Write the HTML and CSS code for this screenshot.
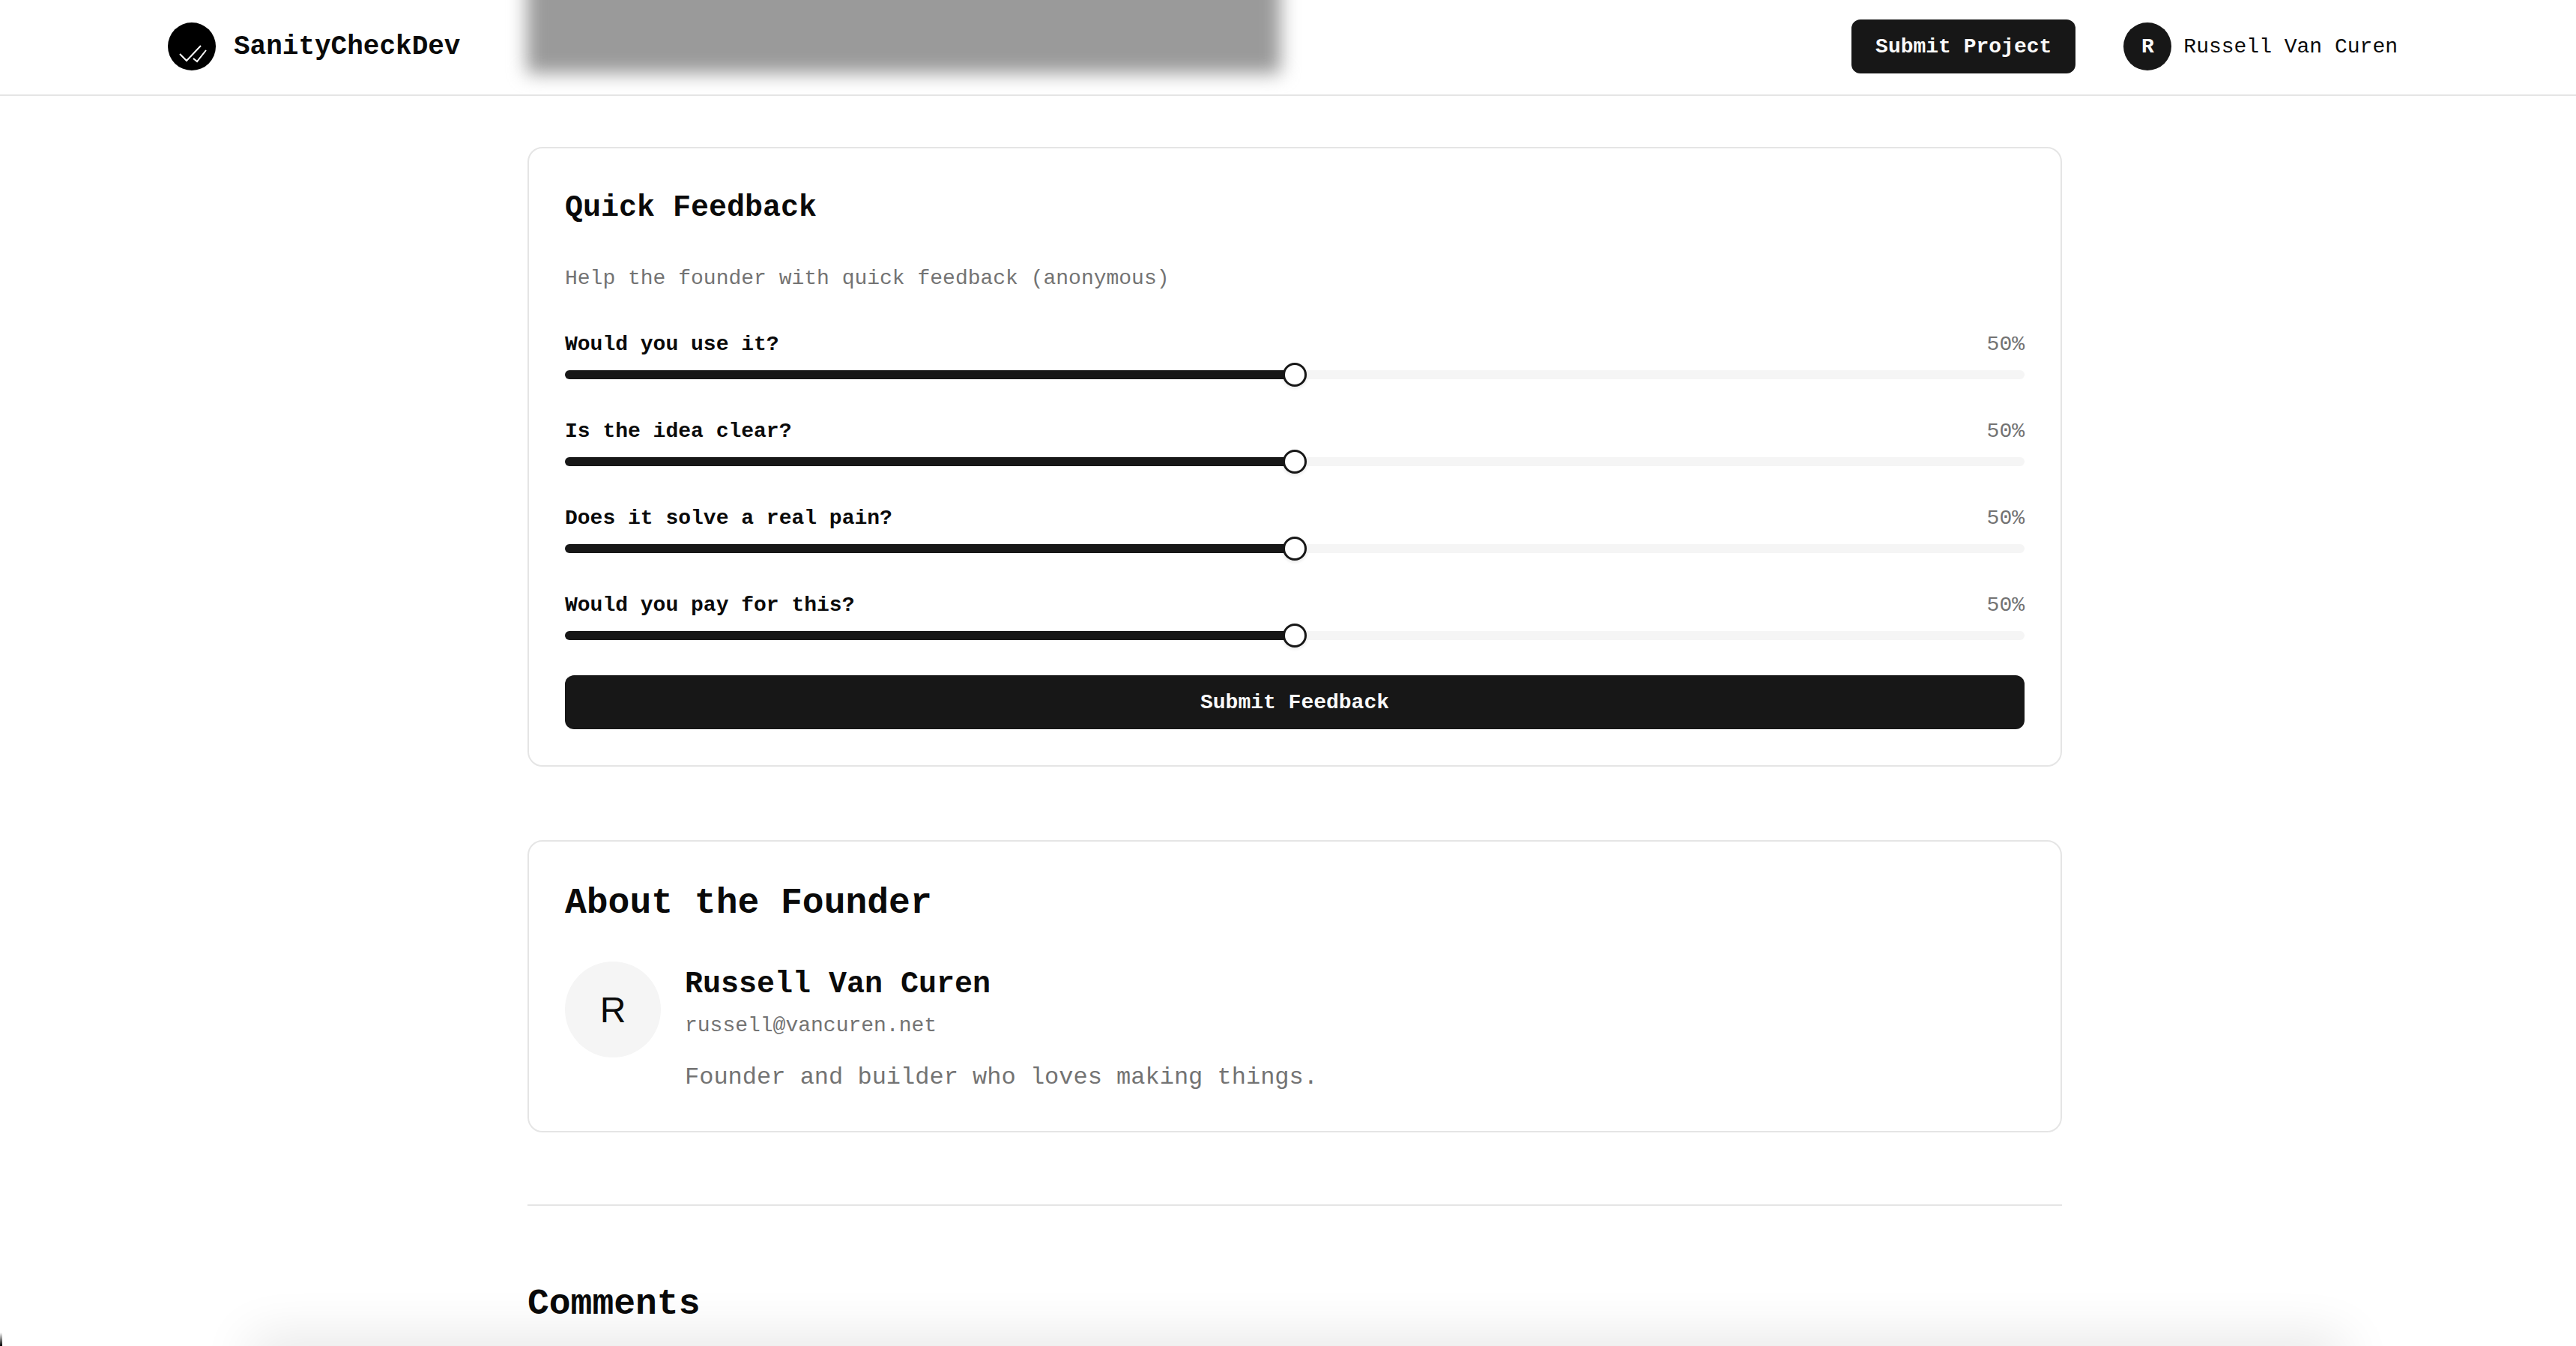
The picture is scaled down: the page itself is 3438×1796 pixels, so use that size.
FILE: index.html
```html
<!DOCTYPE html>
<html>
<head>
  <title>SanityCheckDev</title>
  <link rel="stylesheet" href="styles.css">
</head>
<body>

  <header class="site-header">
    <div class="hero-peek"></div>
    <div class="brand">
      <span class="brand-logo">
        <svg viewBox="0 0 64 64" width="64" height="64">
          <circle cx="32" cy="32" r="32" fill="#000"/>
          <path d="M16 42l9 9 19-20" fill="none" stroke="#fff" stroke-width="2"/>
          <path d="M34 48l5 4 12-15" fill="none" stroke="#fff" stroke-width="2"/>
        </svg>
      </span>
      <span class="brand-name">SanityCheckDev</span>
    </div>
    <div class="header-actions">
      <button type="button" class="btn btn-header">Submit Project</button>
      <div class="user-chip">
        <span class="user-avatar">R</span>
        <span class="user-name">Russell Van Curen</span>
      </div>
    </div>
  </header>

  <main class="content">
    <section class="card feedback-card">
      <h3 class="feedback-title">Quick Feedback</h3>
      <p class="feedback-help">Help the founder with quick feedback (anonymous)</p>

      <div class="rating">
        <div class="rating-head"><span class="rating-label">Would you use it?</span><span class="rating-value">50%</span></div>
        <div class="track"><div class="track-fill"></div><div class="thumb"></div></div>
      </div>
      <div class="rating">
        <div class="rating-head"><span class="rating-label">Is the idea clear?</span><span class="rating-value">50%</span></div>
        <div class="track"><div class="track-fill"></div><div class="thumb"></div></div>
      </div>
      <div class="rating">
        <div class="rating-head"><span class="rating-label">Does it solve a real pain?</span><span class="rating-value">50%</span></div>
        <div class="track"><div class="track-fill"></div><div class="thumb"></div></div>
      </div>
      <div class="rating">
        <div class="rating-head"><span class="rating-label">Would you pay for this?</span><span class="rating-value">50%</span></div>
        <div class="track"><div class="track-fill"></div><div class="thumb"></div></div>
      </div>

      <button type="button" class="btn btn-block">Submit Feedback</button>
    </section>

    <section class="card founder-card">
      <h2 class="section-title">About the Founder</h2>
      <div class="founder">
        <div class="founder-avatar">R</div>
        <div class="founder-info">
          <div class="founder-name">Russell Van Curen</div>
          <div class="founder-email">russell@vancuren.net</div>
          <p class="founder-bio">Founder and builder who loves making things.</p>
        </div>
      </div>
    </section>

    <hr class="divider">

    <h2 class="section-title comments-title">Comments</h2>
  </main>

  <div class="floating-bar"></div>
  <div class="window-corner"></div>

</body>
</html>
```

FILE: styles.css
```css
html, body {
    height: 100%;
}

body {
    font-family: 'Liberation Mono', monospace;
    font-size: 28px;
    margin: 0;
    padding: 0;
    background-color: #ffffff;
    color: #0a0a0a;
    overflow: hidden;
}

.site-header {
    position: relative;
    display: flex;
    align-items: center;
    justify-content: space-between;
    box-sizing: border-box;
    height: 128px;
    padding: 0 238px 2px 224px;
    border-bottom: 2px solid #e5e5e5;
    overflow: hidden;
}

.hero-peek {
    position: absolute;
    left: 703px;
    top: -60px;
    width: 1006px;
    height: 158px;
    background-color: #9a9a9a;
    filter: blur(12px);
}

.brand {
    position: relative;
    display: flex;
    align-items: center;
    gap: 24px;
}

.brand-logo {
    display: block;
    width: 64px;
    height: 64px;
}

.brand-name {
    font-size: 36px;
    font-weight: bold;
    color: #0a0a0a;
}

.header-actions {
    position: relative;
    display: flex;
    align-items: center;
    gap: 64px;
}

.btn {
    display: block;
    font-family: inherit;
    font-size: 28px;
    font-weight: bold;
    color: #fafafa;
    background-color: #171717;
    border: none;
    border-radius: 12px;
    height: 72px;
    padding: 0 32px;
}

.user-chip {
    display: flex;
    align-items: center;
    gap: 16px;
}

.user-avatar {
    display: flex;
    align-items: center;
    justify-content: center;
    width: 64px;
    height: 64px;
    border-radius: 50%;
    background-color: #171717;
    color: #fafafa;
    font-weight: bold;
}

.user-name {
    color: #0a0a0a;
}

.content {
    box-sizing: border-box;
    width: 2048px;
    margin-left: 704px;
    padding-top: 68px;
}

.card {
    box-sizing: border-box;
    border: 2px solid #e5e5e5;
    border-radius: 20px;
    padding: 48px;
}

.feedback-card {
    height: 827px;
    margin-bottom: 98px;
}

.feedback-title {
    font-size: 40px;
    font-weight: bold;
    line-height: 64px;
    margin: 0 0 42px;
}

.feedback-help {
    color: #737373;
    line-height: 40px;
    margin: 0 0 48px;
}

.rating {
    margin-bottom: 50px;
}

.rating:last-of-type {
    margin-bottom: 0;
}

.rating-head {
    display: flex;
    justify-content: space-between;
    line-height: 40px;
    margin-bottom: 14px;
}

.rating-label {
    font-weight: bold;
}

.rating-value {
    color: #737373;
}

.track {
    position: relative;
    height: 12px;
    border-radius: 6px;
    background-color: #f5f5f5;
}

.track-fill {
    width: 50%;
    height: 100%;
    border-radius: 6px 0 0 6px;
    background-color: #171717;
}

.thumb {
    position: absolute;
    left: 50%;
    top: -10px;
    box-sizing: border-box;
    width: 32px;
    height: 32px;
    margin-left: -16px;
    border: 3px solid #171717;
    border-radius: 50%;
    background-color: #ffffff;
    box-shadow: 0 2px 4px rgba(0, 0, 0, 0.1);
}

.btn-block {
    width: 100%;
    margin-top: 47px;
}

.section-title {
    font-size: 48px;
    font-weight: bold;
    line-height: 68px;
    margin: 0;
}

.founder-card {
    height: 390px;
}

.founder {
    display: flex;
    gap: 32px;
    margin-top: 44px;
}

.founder-avatar {
    display: flex;
    align-items: center;
    justify-content: center;
    flex-shrink: 0;
    width: 128px;
    height: 128px;
    border-radius: 50%;
    background-color: #f5f5f5;
    font-family: 'Liberation Sans', sans-serif;
    font-size: 48px;
}

.founder-name {
    font-size: 40px;
    font-weight: bold;
    line-height: 62px;
}

.founder-email {
    color: #737373;
    line-height: 40px;
    margin-top: 4px;
}

.founder-bio {
    font-size: 32px;
    line-height: 48px;
    color: #737373;
    margin: 25px 0 0;
}

.divider {
    height: 2px;
    border: none;
    background-color: #e5e5e5;
    margin: 96px 0 0;
}

.comments-title {
    margin-top: 97px;
}

.floating-bar {
    position: fixed;
    left: 345px;
    right: 320px;
    bottom: -40px;
    height: 40px;
    box-shadow: 0 0 70px 10px rgba(0, 0, 0, 0.11);
}

.window-corner {
    position: fixed;
    left: 0;
    bottom: 0;
    width: 3px;
    height: 18px;
    background: linear-gradient(transparent, #000000);
}
```
